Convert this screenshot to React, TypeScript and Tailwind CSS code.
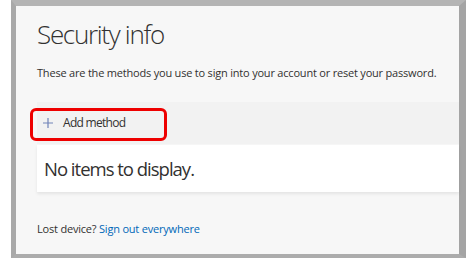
import React from "react";

export default function App() {
  return (
    <div className="w-[466px] h-[258px] bg-white overflow-hidden" style={{ fontFamily: '"Open Sans", "Noto Sans", sans-serif' }}>
      <div className="ml-[11px] w-[455px] h-[258px] border-t-[6px] border-l-[5px] border-r-[7px] border-b-[4px] border-t-[#b4b4b4] border-l-[#a9a9a9] border-r-[#a4a4a4] border-b-[#acacac] bg-[#f7f7f7] flex flex-col">
        <div className="pl-[21px] pt-[11px]">
          <h1 className="text-[26px] leading-[34px] font-light text-[#323130] tracking-[-1.3px]">Security info</h1>
          <p className="mt-[15px] text-[11px] leading-[14px] text-[#323130] tracking-[-0.2px]">
            These are the methods you use to sign into your account or reset your password.
          </p>
        </div>
        <div className="ml-[21px] mt-[22px] h-[42px] bg-[#f2f2f2] flex items-center relative">
          <div className="absolute left-[-7px] top-[6px] w-[137px] h-[33px] border-[3px] border-[#ee0000] rounded-[6px]" />
          <svg width="10" height="10" viewBox="0 0 10 10" className="ml-[6px]">
            <path d="M5 0V10M0 5H10" stroke="#7083b8" strokeWidth="1.2" />
          </svg>
          <span className="ml-[10px] text-[12px] text-[#323130] tracking-[-0.7px]">Add method</span>
        </div>
        <div className="ml-[21px] mt-[1px] h-[47px] bg-white shadow-[0_2px_3px_rgba(0,0,0,0.08)] flex items-center pl-[7px]">
          <span className="text-[18.5px] text-[#323130] tracking-[-1px]">No items to display.</span>
        </div>
        <div className="pl-[21px] mt-[30px] text-[11px] leading-[14px] tracking-[-0.2px]">
          <span className="text-[#323130]">Lost device? </span>
          <a className="text-[#0067b8]">Sign out everywhere</a>
        </div>
      </div>
    </div>
  );
}
